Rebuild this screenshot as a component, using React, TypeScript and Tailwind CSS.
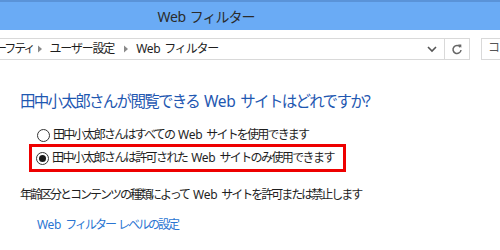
import React from "react";

const jp = "font-['Noto_Sans','Noto_Sans_CJK_JP',sans-serif]";

function Crumb() {
    return (
        <svg width="6" height="8" viewBox="0 0 6 8" className="shrink-0">
            <path d="M1 0.5 L5 4 L1 7.5 Z" fill="#8a8a8a" />
        </svg>
    );
}

function Radio({ checked }: { checked?: boolean }) {
    return (
        <span className="flex size-[13px] shrink-0 items-center justify-center rounded-full border border-[#333333] bg-white">
            {checked && <span className="size-[7px] rounded-full bg-[#1a1a1a]" />}
        </span>
    );
}

// "Web" with the wider gaps around it that the tight tracking eats
function Web() {
    return <span className="mx-[4px] tracking-[-0.3px]">Web</span>;
}

export default function App() {
    return (
        <div className={`w-[500px] h-[250px] overflow-hidden bg-white ${jp}`}>
            <div className="h-[30px] border-t-2 border-[#5a93d8] bg-[#6aabf5] flex items-center justify-center pr-[88px]">
                <span className="text-[14px] text-[#2b2b2b] tracking-[-1px]">
                    <span className="mr-[4px] tracking-[-0.3px]">Web</span>フィルター
                </span>
            </div>
            <div className="mt-[8px] flex h-[22px] items-stretch">
                <div className="flex w-[473px] items-stretch border border-l-0 border-[#d9d9d9]">
                    <div className="flex flex-1 items-center overflow-hidden whitespace-nowrap text-[12px] text-[#1e1e1e] tracking-[-1.2px]">
                        <span className="-ml-[15px] tracking-[-2px]">セーフティ</span>
                        <span className="ml-[3px]">
                            <Crumb />
                        </span>
                        <span className="ml-[7px]">ユーザー設定</span>
                        <span className="ml-[9px]">
                            <Crumb />
                        </span>
                        <span className="ml-[7px]">
                            <span className="mr-[4px] tracking-[-0.3px]">Web</span>フィルター
                        </span>
                    </div>
                    <div className="flex w-[24px] items-center justify-center">
                        <svg width="10" height="7" viewBox="0 0 10 7">
                            <path d="M1 1 L5 5 L9 1" fill="none" stroke="#555" strokeWidth="1.6" />
                        </svg>
                    </div>
                    <div className="flex w-[25px] items-center justify-center border-l border-[#d9d9d9]">
                        <svg width="12" height="12" viewBox="0 0 12 12">
                            <path d="M9.3 4.2 A4 4 0 1 0 10 7" fill="none" stroke="#666" strokeWidth="1.5" />
                            <path d="M7 1.5 L10.3 1.5 L10.3 4.8 Z" fill="#666" />
                        </svg>
                    </div>
                </div>
                <div className="ml-[11px] flex-1 border border-r-0 border-[#d9d9d9] pl-[6px] text-[12px] text-[#555]">
                    コ
                </div>
            </div>

            <div className="mt-[31px] pl-[20px] whitespace-nowrap">
                <h1 className="text-[15.5px] leading-[20px] text-[#1f58b1] tracking-[-1.7px]">
                    田中小太郎さんが閲覧できる<span className="mx-[5px] tracking-[-0.4px]">Web</span>サイトはどれですか?
                </h1>
                <div className="mt-[16px] ml-[17px] flex items-center gap-[3px] text-[12px] leading-[16px] text-[#1e1e1e] tracking-[-1.8px]">
                    <Radio />
                    <span>
                        田中小太郎さんはすべての<Web />サイトを使用できます
                    </span>
                </div>
                <div className="mt-[1px] ml-[9px] flex h-[28px] w-[317px] items-center gap-[3px] border-[3px] border-[#ee0000] pl-[4px] text-[12px] text-[#1e1e1e] tracking-[-1.6px]">
                    <Radio checked />
                    <span>
                        田中小太郎さんは許可された<Web />サイトのみ使用できます
                    </span>
                </div>
                <p className="mt-[15px] text-[12px] leading-[16px] text-[#1e1e1e] tracking-[-2px]">
                    年齢区分とコンテンツの種類によって<Web />サイトを許可または禁止します
                </p>
                <a className="mt-[14px] ml-[17px] block text-[12px] leading-[16px] text-[#2a75d2] tracking-[-2px]">
                    <span className="mr-[4px] tracking-[-0.3px]">Web</span>フィルター<span className="ml-[3px]">レベルの設定</span>
                </a>
            </div>
        </div>
    );
}
